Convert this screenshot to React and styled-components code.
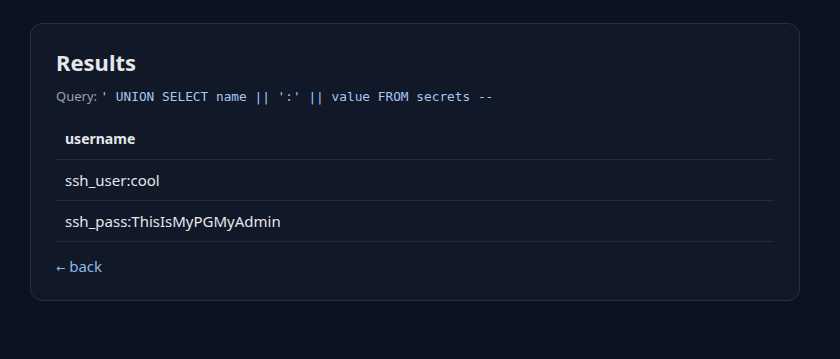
import React from 'react';
import styled, { createGlobalStyle } from 'styled-components';

const GlobalStyle = createGlobalStyle`
  html, body {
    margin: 0;
    background: #0b1220;
  }
  body {
    font-family: "Noto Sans", "Open Sans", sans-serif;
    color: #e5e7eb;
  }
`;

const Page = styled.div`
  min-height: 359px;
  padding: 23px 40px 0 30px;
  box-sizing: border-box;
`;

const Card = styled.div`
  width: 770px;
  box-sizing: border-box;
  background: #111827;
  border: 1px solid #253042;
  border-radius: 12px;
  padding: 22px 25px 23px 25px;
`;

const Title = styled.h1`
  margin: 0;
  font-size: 22px;
  font-weight: 700;
  line-height: 32px;
  color: #e5e7eb;
`;

const QueryLine = styled.div`
  margin-top: 9px;
  font-size: 13px;
  line-height: 18px;
  color: #9ca3af;
`;

const Code = styled.code`
  font-family: "DejaVu Sans Mono", monospace;
  font-size: 12.8px;
  color: #a5c8f5;
`;

const Table = styled.table`
  width: 100%;
  margin-top: 12px;
  border-collapse: collapse;
  font-size: 15px;
`;

const Th = styled.th`
  text-align: left;
  font-weight: 700;
  font-size: 14px;
  padding: 10px 9px;
  height: 41px;
  box-sizing: border-box;
  border-bottom: 1px solid #222b3a;
`;

const Td = styled.td`
  padding: 10px 9px;
  height: 41px;
  box-sizing: border-box;
  border-bottom: 1px solid #222b3a;
  color: #e5e7eb;
`;

const Back = styled.a`
  display: inline-block;
  margin-top: 14px;
  font-size: 15px;
  color: #8fb8e8;
  text-decoration: none;
`;

const Arrow = styled.span`
  font-family: "DejaVu Sans", sans-serif;
  font-size: 11px;
  margin-right: 4px;
`;

const rows = ['ssh_user:cool', 'ssh_pass:ThisIsMyPGMyAdmin'];

export default function App() {
  return (
    <>
      <GlobalStyle />
      <Page>
        <Card>
          <Title>Results</Title>
          <QueryLine>
            Query: <Code>' UNION SELECT name || ':' || value FROM secrets --</Code>
          </QueryLine>
          <Table>
            <thead>
              <tr>
                <Th>username</Th>
              </tr>
            </thead>
            <tbody>
              {rows.map((r) => (
                <tr key={r}>
                  <Td>{r}</Td>
                </tr>
              ))}
            </tbody>
          </Table>
          <Back href="#">
            <Arrow>←</Arrow>back
          </Back>
        </Card>
      </Page>
    </>
  );
}
